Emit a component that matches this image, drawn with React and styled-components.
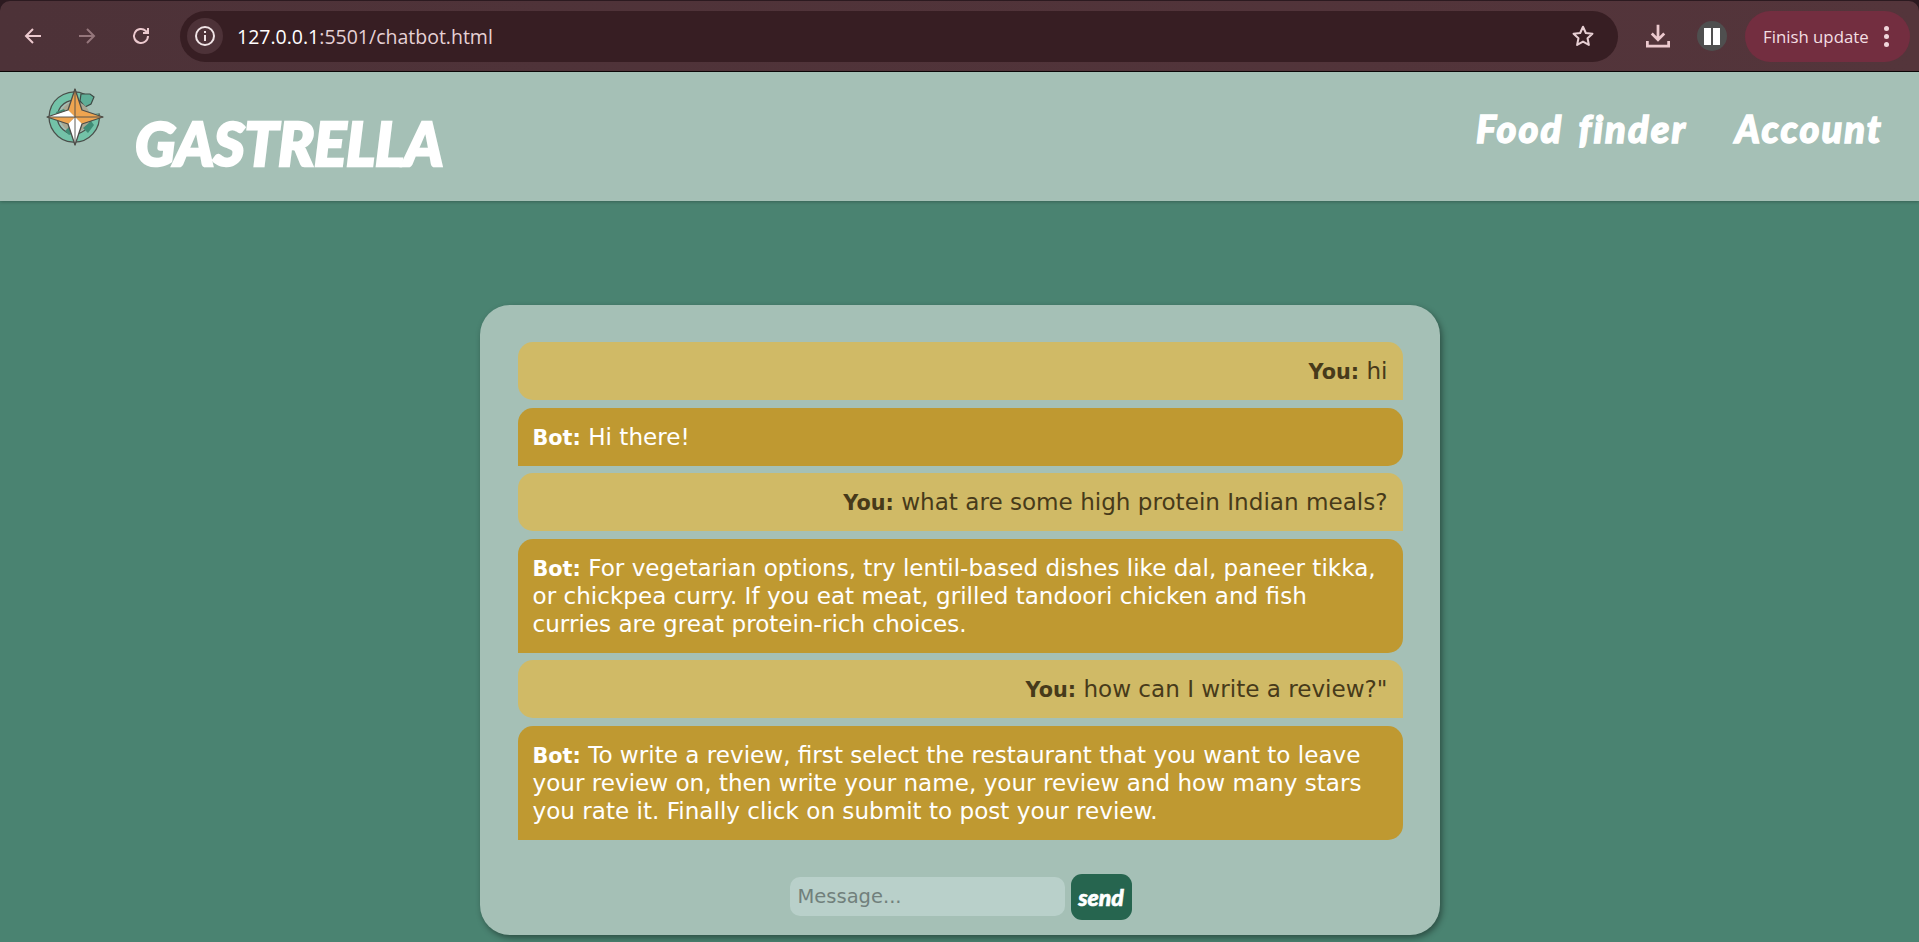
import React from "react";
import styled, { createGlobalStyle } from "styled-components";

const Global = createGlobalStyle`
  html, body { margin: 0; padding: 0; height: 942px; overflow: hidden; background: #4a8371; }
  * { box-sizing: border-box; }
`;
const Page = styled.div`display:flex;flex-direction:column;height:942px;width:1919px;overflow:hidden;`;
const BrowserBar = styled.div`
  height:72px;flex:none;display:flex;align-items:center;background:#2c1a20;border-bottom:1px solid #0c0708;padding-top:1px;
`;
const BarInner = styled.div`
  flex:1;height:70px;display:flex;align-items:center;background:linear-gradient(90deg,#4d3238,#54353b);border-radius:10px 10px 0 0;padding:0 9px 0 15px;
`;
const NavBtn = styled.span`
  width:36px;height:36px;display:flex;align-items:center;justify-content:center;margin-right:${p=>p.$gap||18}px;opacity:${p=>p.$dim?0.45:1};flex:none;
`;
const Omnibox = styled.div`
  width:1438px;height:51px;flex:none;border-radius:26px;background:#371e23;display:flex;align-items:center;padding:0 22px 0 7px;
`;
const InfoChip = styled.span`
  width:36px;height:36px;border-radius:50%;background:#4d3238;display:flex;align-items:center;justify-content:center;flex:none;
`;
const Url = styled.span`
  margin-left:14px;font:19.5px "Open Sans","Noto Sans",sans-serif;color:#e6d1d5;flex:1;
  b{font-weight:400;color:#fff;}
`;
const ToolSlot = styled.span`display:flex;align-items:center;justify-content:center;flex:none;margin-left:${p=>p.$ml||0}px;`;
const PauseBadge = styled.span`
  width:30px;height:30px;border-radius:50%;background:#4f4f4f;display:flex;align-items:center;justify-content:center;gap:2px;
`;
const PauseBar = styled.i`display:block;width:7px;height:17px;background:#fff;`;
const UpdateBtn = styled.div`
  width:165px;height:51px;margin-left:18px;border-radius:26px;background:#732e40;display:flex;align-items:center;padding-left:18px;
  font:16.8px "Open Sans","Noto Sans",sans-serif;color:#f3dfe3;flex:none;
`;
const Kebab = styled.span`
  margin-left:15px;display:flex;flex-direction:column;gap:3px;
  i{display:block;width:5px;height:5px;border-radius:50%;background:#f0d6db;}
`;
const Header = styled.header`
  height:129px;flex:none;background:#a5c0b6;display:flex;justify-content:space-between;box-shadow:0 1px 3px rgba(0,0,0,.25);position:relative;
  padding:0 36px 0 46px;
`;
const Brand = styled.div`display:flex;align-items:flex-start;`;
const Logo = styled.svg`width:58px;height:58px;margin-top:16px;flex:none;`;
const Title = styled.h1`
  margin:41px 0 0 31px;font:italic 900 60px/1 "Lato",sans-serif;color:#fff;-webkit-text-stroke:2.5px #fff;letter-spacing:-.2px;
`;
const Nav = styled.nav`display:flex;gap:48px;margin-top:36px;align-items:flex-start;`;
const NavLink = styled.a`
  font:italic 900 38px/1.1 "Lato",sans-serif;color:#fff;-webkit-text-stroke:1.4px #fff;letter-spacing:2.1px;word-spacing:5px;
`;
const Main = styled.main`flex:1;display:flex;justify-content:center;padding-top:104px;`;
const Card = styled.section`
  width:960px;height:630px;background:#a5c0b6;border-radius:30px;box-shadow:2px 3px 6px rgba(0,0,0,.4);padding:37px 37px 0 38px;
  display:flex;flex-direction:column;
`;
const Messages = styled.div`display:flex;flex-direction:column;gap:7.5px;`;
const Bubble = styled.div`
  font:23.1px/28px "DejaVu Sans",sans-serif;padding:15px;
  b{font-weight:700;font-size:.9em;line-height:1;}
  ${p=>p.$bot?`
    background:#bf9931;color:#fff;border-radius:15px 15px 15px 0;
  `:`
    background:#d0ba66;color:#473a1a;text-align:right;border-radius:15px 15px 0 15px;
  `}
`;
const InputRow = styled.form`display:flex;justify-content:center;align-items:center;gap:6px;margin-top:34px;padding-left:1px;`;
const Input = styled.input`
  width:275px;height:39px;border:none;border-radius:10px;background:#b9d0ca;padding:0 8px;
  font:19.5px "DejaVu Sans",sans-serif;color:#333;outline:none;
  &::placeholder{color:#71807c;}
`;
const Send = styled.button`
  width:61px;height:46px;border:none;border-radius:11px;background:#26654f;color:#fff;padding:0;
  font:italic 900 23px "Lato",sans-serif;-webkit-text-stroke:.6px #fff;
`;

const Ic = ({children,s=24,c="#ecc9ce",w=2})=>(
  <svg width={s} height={s} viewBox="0 0 24 24" fill="none" stroke={c} strokeWidth={w}>{children}</svg>
);

const CompassLogo = () => (
  <Logo viewBox="0 0 58 58">
    <path d="M37 10 A21 21 0 1 0 49 26" fill="none" stroke="#4a4f4b" strokeWidth="9.5"/>
    <path d="M37 10 A21 21 0 1 0 49 26" fill="none" stroke="#73c2a8" strokeWidth="7"/>
    <path d="M35 6l9 0 4 3-3 7-6 3-5-6z" fill="#5fae97" stroke="#3e4a45" strokeWidth="1.2"/>
    <circle cx="29" cy="29" r="15" fill="#a9a792"/>
    <path d="M10 24l8-3 4 6-5 6-6-3zM37 40l8-7 3 4-6 8zM19 43l6-6 5 7-7 3z" fill="#3f8b75"/>
    <path d="M29 1 L36 22 L29 29 L22 22 Z" fill="#efa550"/>
    <path d="M57 29 L36 22 L29 29 L36 36 Z" fill="#efa550"/>
    <path d="M29 57 L36 36 L29 29 L22 36 Z" fill="#fff"/>
    <path d="M1 29 L22 22 L29 29 Z" fill="#fff"/>
    <path d="M1 29 L22 36 L29 29 Z" fill="#efa550"/>
    <path d="M29 1L36 22L57 29L36 36L29 57L22 36L1 29L22 22Z" fill="none" stroke="#4d4d48" strokeWidth="1.3" strokeLinejoin="round"/>
    <path d="M29 1V57M1 29H57" stroke="#4d4d48" strokeWidth=".9"/>
  </Logo>
);

const messages = [
  {who:"You",text:"hi"},
  {who:"Bot",text:"Hi there!"},
  {who:"You",text:"what are some high protein Indian meals?"},
  {who:"Bot",text:"For vegetarian options, try lentil-based dishes like dal, paneer tikka, or chickpea curry. If you eat meat, grilled tandoori chicken and fish curries are great protein-rich choices."},
  {who:"You",text:'how can I write a review?"'},
  {who:"Bot",text:"To write a review, first select the restaurant that you want to leave your review on, then write your name, your review and how many stars you rate it. Finally click on submit to post your review."},
];

export default function App(){
  return (
    <Page>
      <Global/>
      <BrowserBar>
        <BarInner>
          <NavBtn><Ic><path d="M20 12H5M12 5l-7 7 7 7"/></Ic></NavBtn>
          <NavBtn $dim><Ic><path d="M4 12h15M12 5l7 7-7 7"/></Ic></NavBtn>
          <NavBtn $gap={21}><Ic><path d="M19 12a7 7 0 1 1-2.2-5.1L19 9M19 4v5h-5"/></Ic></NavBtn>
          <Omnibox>
            <InfoChip><Ic s={24} c="#f0e4e6"><circle cx="12" cy="12" r="9"/><path d="M12 11v6M12 7v2"/></Ic></InfoChip>
            <Url><b>127.0.0.1</b>:5501/chatbot.html</Url>
            <Ic s={26} c="#e6ced2" w={1.9}><path d="M12 3.5l2.6 5.7 6.1.7-4.5 4.2 1.2 6.1L12 17.2l-5.4 3 1.2-6.1-4.5-4.2 6.1-.7z" strokeLinejoin="round"/></Ic>
          </Omnibox>
          <ToolSlot $ml={25}><Ic s={30} c="#ecc9ce" w={2.2}><path d="M12 3v12M7 10l5 5 5-5M3.5 16v4h17v-4"/></Ic></ToolSlot>
          <ToolSlot $ml={24}><PauseBadge><PauseBar/><PauseBar/></PauseBadge></ToolSlot>
          <UpdateBtn>Finish update<Kebab><i/><i/><i/></Kebab></UpdateBtn>
        </BarInner>
      </BrowserBar>
      <Header>
        <Brand><CompassLogo/><Title>GASTRELLA</Title></Brand>
        <Nav><NavLink>Food finder</NavLink><NavLink>Account</NavLink></Nav>
      </Header>
      <Main>
        <Card>
          <Messages>
            {messages.map((m,i)=>(
              <Bubble key={i} $bot={m.who==="Bot"}><b>{m.who}:</b> {m.text}</Bubble>
            ))}
          </Messages>
          <InputRow>
            <Input placeholder="Message..."/>
            <Send type="button">send</Send>
          </InputRow>
        </Card>
      </Main>
    </Page>
  );
}
